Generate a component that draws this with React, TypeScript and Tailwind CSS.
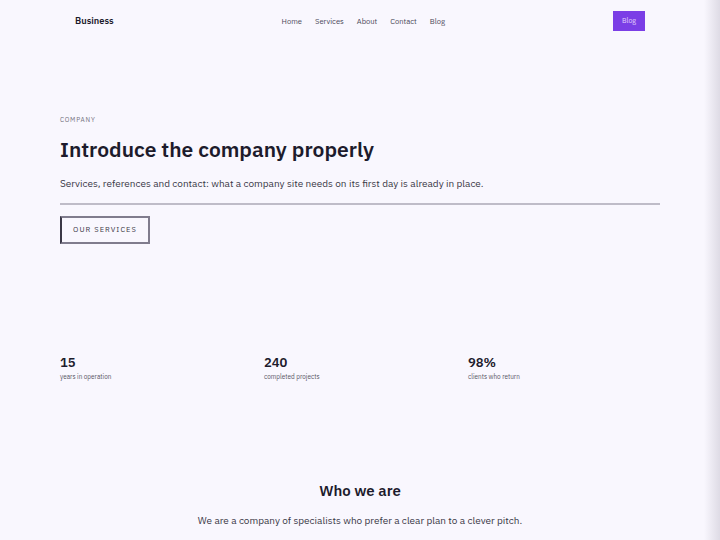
export default function App() {
  const stats = [
    { value: "15", label: "years in operation" },
    { value: "240", label: "completed projects" },
    { value: "98%", label: "clients who return" },
  ];

  return (
    <div
      className="relative min-h-[540px] w-full overflow-hidden bg-[#f9f7fe] text-[#1d1b2c]"
      style={{ fontFamily: '"IBM Plex Sans", "Noto Sans", sans-serif' }}
    >
      {/* Header */}
      <header className="flex h-[42px] items-center justify-between px-[75px]">
        <span className="text-[9.3px] font-semibold">Business</span>
        <nav className="flex items-center gap-[13px] pt-[1px] text-[7.6px] text-[#4b4859]">
          <a>Home</a>
          <a>Services</a>
          <a>About</a>
          <a>Contact</a>
          <a>Blog</a>
        </nav>
        <button className="h-[20px] w-[32px] bg-[#7b3ee6] text-[7px] text-[#e3d5fc]">Blog</button>
      </header>

      {/* Hero */}
      <section className="px-[60px] pt-[73px]">
        <p className="text-[6.5px] tracking-[0.12em] text-[#75727f]">COMPANY</p>
        <h1 className="mt-[10px] text-[21px] font-semibold leading-[29px]">Introduce the company properly</h1>
        <p className="mt-[12px] text-[10px] text-[#3a3747]">
          Services, references and contact: what a company site needs on its first day is already in place.
        </p>
        <div className="mt-[12px] h-[2px] w-full bg-[#bfbcc8]" />
        <button className="mt-[11px] flex h-[28px] w-[90px] items-center justify-center border-2 border-[#807c8d] border-l-[#3a3746] text-[7.5px] tracking-[0.14em] text-[#3b3848]">
          OUR SERVICES
        </button>
      </section>

      {/* Stats */}
      <section className="mt-[110px] grid grid-cols-3 gap-3 px-[60px]">
        {stats.map((s) => (
          <div key={s.label}>
            <div className="text-[13px] font-semibold leading-[18px]">{s.value}</div>
            <div className="text-[6.4px] text-[#55525f]">{s.label}</div>
          </div>
        ))}
      </section>

      {/* About */}
      <section className="mt-[99px] px-[60px] text-center">
        <h2 className="text-[15px] font-semibold">Who we are</h2>
        <p className="mt-[10px] text-[10px] text-[#3a3747]">
          We are a company of specialists who prefer a clear plan to a clever pitch.
        </p>
      </section>

      <div className="pointer-events-none absolute inset-y-0 right-0 w-[16px] bg-gradient-to-r from-transparent to-[#dedbe5]" />
    </div>
  );
}
